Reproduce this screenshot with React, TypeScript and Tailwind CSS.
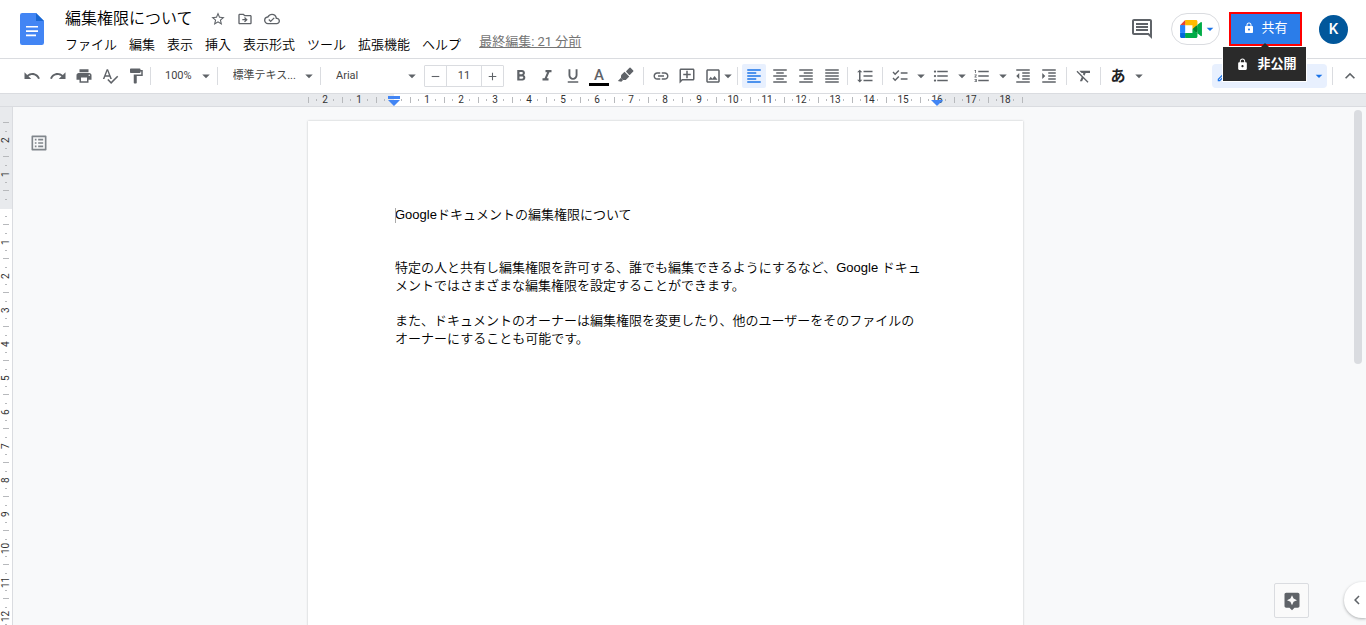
import type { ReactNode } from 'react';
import type { IconType } from 'react-icons';
import {
  MdAdd,
  MdArrowDropDown,
  MdAssistant,
  MdChecklist,
  MdChevronLeft,
  MdExpandLess,
  MdFormatAlignCenter,
  MdFormatAlignJustify,
  MdFormatAlignLeft,
  MdFormatAlignRight,
  MdFormatBold,
  MdFormatClear,
  MdFormatIndentDecrease,
  MdFormatIndentIncrease,
  MdFormatItalic,
  MdFormatLineSpacing,
  MdFormatListBulleted,
  MdFormatListNumbered,
  MdFormatPaint,
  MdFormatUnderlined,
  MdLink,
  MdLock,
  MdOutlineAddComment,
  MdOutlineCloudDone,
  MdOutlineComment,
  MdOutlineDriveFileMove,
  MdOutlineEdit,
  MdOutlineImage,
  MdOutlineListAlt,
  MdPrint,
  MdRedo,
  MdRemove,
  MdSpellcheck,
  MdStarBorder,
  MdUndo,
} from 'react-icons/md';

const MENUS = ['ファイル', '編集', '表示', '挿入', '表示形式', 'ツール', '拡張機能', 'ヘルプ'];

// Centimetre marks, counted outwards from the page margin
const H_MARKS = [2, 1, 0, ...Array.from({ length: 18 }, (_, i) => i + 1)];
const V_MARKS = [2, 1, 0, ...Array.from({ length: 12 }, (_, i) => i + 1)];

export default function App() {
  return (
    <div className="flex h-screen flex-col overflow-hidden bg-[#f8f9fa] font-[Roboto,'Noto_Sans_CJK_JP',sans-serif] text-[13px] text-[#202124]">
      <Header />
      <Toolbar />
      <HorizontalRuler />
      <div className="flex min-h-0 flex-1">
        <VerticalRuler />
        <Workspace />
      </div>
    </div>
  );
}

function Header() {
  return (
    <header className="flex h-[59px] shrink-0 items-start border-b border-[#dadce0] bg-white pl-5 pr-[18px]">
      <a href="#" aria-label="ドキュメント ホーム" className="mt-[13px]">
        <DocsLogo />
      </a>

      <div className="ml-[21px] flex flex-col pt-1.5">
        <div className="flex h-[26px] items-center">
          <h1 className="whitespace-nowrap text-[16px] font-[350] text-black">編集権限について</h1>
          <div className="ml-[17px] flex gap-[11px] text-[#5f6368]">
            <button aria-label="スター"><MdStarBorder size={16} /></button>
            <button aria-label="移動"><MdOutlineDriveFileMove size={16} /></button>
            <button aria-label="ドキュメントのステータス"><MdOutlineCloudDone size={16} /></button>
          </div>
        </div>
        <nav className="-ml-1.5 flex h-[26px] items-center">
          {MENUS.map((m) => (
            <button key={m} className="whitespace-nowrap px-1.5 font-[350] text-black">{m}</button>
          ))}
          <a href="#" className="mb-1.5 ml-3 whitespace-nowrap text-[#757575] underline">最終編集: 21 分前</a>
        </nav>
      </div>

      <div className="ml-auto flex items-center pt-3">
        <button aria-label="コメント履歴を開く" className="text-[#5f6368]">
          <MdOutlineComment size={24} />
        </button>
        <button aria-label="ビデオ通話に参加" className="ml-[17px] flex h-8 w-[49px] items-center justify-center rounded-full border border-[#dadce0] pl-1.5">
          <MeetLogo />
          <MdArrowDropDown size={16} className="shrink-0 text-[#1a73e8]" />
        </button>
        <div className="relative ml-[9px]">
          <button className="flex h-[34px] w-[73px] items-center justify-center gap-1.5 border-2 border-[#ff0000] bg-[#2b7de9] pb-0.5 text-white">
            <MdLock size={12} />
            共有
          </button>
          {/* Tooltip hanging from the share button */}
          <div role="tooltip" className="absolute -left-[7px] top-[34px] z-10 flex h-9 w-[85px] items-center justify-center gap-2 border border-white bg-[#2a2a2a] pl-1 font-bold text-white">
            <MdLock size={13} />
            非公開
            <svg width="8" height="4" viewBox="0 0 8 4" className="absolute -top-1 left-[38px]">
              <path d="M4 0 8 4H0z" fill="#2a2a2a" />
            </svg>
          </div>
        </div>
        <button aria-label="アカウント" className="ml-[17px] flex size-[29px] items-center justify-center rounded-full bg-[#01579b] text-[15px] font-medium text-white">
          K
        </button>
      </div>
    </header>
  );
}

function Toolbar() {
  return (
    <div role="toolbar" className="flex h-[34px] shrink-0 items-center bg-white text-[#5f6368]">
      <Group className="w-[151px] pl-[18px]">
        <Tool icon={MdUndo} label="元に戻す" />
        <Tool icon={MdRedo} label="やり直し" />
        <Tool icon={MdPrint} label="印刷" />
        <Tool icon={MdSpellcheck} label="スペルと文法のチェック" />
        <Tool icon={MdFormatPaint} label="書式を貼り付け" />
      </Group>
      <Group className="w-[67px]">
        <Dropdown label="ズーム" value="100%" className="w-[62px] pl-3" />
      </Group>
      <Group className="w-[103px]">
        <Dropdown label="スタイル" value="標準テキス..." className="w-[97px] pl-3" />
      </Group>
      <Group className="w-[323px] pr-0.5">
        <Dropdown label="フォント" value="Arial" className="w-[97px] pl-3" />
        <div className="ml-[3px] mr-1 flex h-[22px] w-20 rounded-[1px] border border-[#dadce0]">
          <button aria-label="フォントサイズを縮小" className="flex w-[21px] items-center justify-center">
            <MdRemove size={13} />
          </button>
          <input
            aria-label="フォントサイズ"
            defaultValue="11"
            className="w-9 border-x border-[#dadce0] text-center text-[11px] text-[#444]"
          />
          <button aria-label="フォントサイズを拡大" className="flex w-[21px] items-center justify-center">
            <MdAdd size={13} />
          </button>
        </div>
        <Tool icon={MdFormatBold} label="太字" />
        <Tool icon={MdFormatItalic} label="斜体" />
        <Tool icon={MdFormatUnderlined} label="下線" />
        <button aria-label="テキストの色" className="flex w-[26px] flex-col items-center text-[15px] font-medium leading-4">
          A
          <span className="h-[3px] w-5 bg-black" />
        </button>
        <button aria-label="ハイライトの色" className="flex w-[26px] justify-center">
          <HighlighterIcon />
        </button>
      </Group>
      <Group className="w-[94px] pr-1">
        <Tool icon={MdLink} label="リンクを挿入" />
        <Tool icon={MdOutlineAddComment} label="コメントを追加" flip />
        <Tool icon={MdOutlineImage} label="画像を挿入" />
        <Arrow label="画像のオプション" narrow />
      </Group>
      <Group className="w-[110px]">
        <Tool icon={MdFormatAlignLeft} label="左揃え" active />
        <Tool icon={MdFormatAlignCenter} label="中央揃え" />
        <Tool icon={MdFormatAlignRight} label="右揃え" />
        <Tool icon={MdFormatAlignJustify} label="両端揃え" />
      </Group>
      <Group className="w-[35px]">
        <Tool icon={MdFormatLineSpacing} label="行間隔と段落の間隔" />
      </Group>
      <Group className="w-[184px]">
        <Tool icon={MdChecklist} label="チェックリスト" />
        <Arrow label="チェックリストのメニュー" />
        <Tool icon={MdFormatListBulleted} label="箇条書き" />
        <Arrow label="箇条書きメニュー" />
        <Tool icon={MdFormatListNumbered} label="番号付きリスト" />
        <Arrow label="番号付きリストのメニュー" />
        <Tool icon={MdFormatIndentDecrease} label="インデント減" />
        <Tool icon={MdFormatIndentIncrease} label="インデント増" />
      </Group>
      <Group className="w-[34px]">
        <Tool icon={MdFormatClear} label="書式をクリア" />
      </Group>
      <button aria-label="入力ツール" className="ml-1 w-[26px] text-[15px] font-bold text-[#202124]">あ</button>
      <Arrow label="入力ツールを選択" />

      <button aria-label="編集モード" className="ml-auto flex h-6 w-[115px] items-center justify-between rounded bg-[#e8f0fe] pl-1 text-[#1a73e8]">
        <MdOutlineEdit size={14} />
        <MdArrowDropDown size={16} />
      </button>
      <div className="ml-[5px] h-[18px] w-px bg-[#dadce0]" />
      <button aria-label="メニューを非表示" className="flex w-[33px] justify-center">
        <MdExpandLess size={20} />
      </button>
    </div>
  );
}

function Group({ className, children }: { className: string; children: ReactNode }) {
  return (
    <div className={`flex h-[18px] shrink-0 items-center justify-center border-r border-[#dadce0] ${className}`}>
      {children}
    </div>
  );
}

interface ToolProps {
  icon: IconType;
  label: string;
  active?: boolean;
  flip?: boolean;
}

function Tool({ icon: Icon, label, active, flip }: ToolProps) {
  return (
    <button aria-label={label} className="flex w-[26px] shrink-0 justify-center">
      <span className={`flex size-6 items-center justify-center rounded-[2px] ${active ? 'bg-[#e8f0fe] text-[#1a73e8]' : ''}`}>
        <Icon size={18} className={flip ? '-scale-x-100' : ''} />
      </span>
    </button>
  );
}

function Arrow({ label, narrow }: { label: string; narrow?: boolean }) {
  return (
    <button aria-label={label} className={`flex shrink-0 justify-center ${narrow ? 'w-1' : 'w-[15px]'}`}>
      <MdArrowDropDown size={18} className="shrink-0" />
    </button>
  );
}

function Dropdown({ label, value, className }: { label: string; value: string; className: string }) {
  return (
    <div className="flex shrink-0 items-center">
      <select aria-label={label} className={`appearance-none bg-transparent text-[11px] text-[#444] ${className}`}>
        <option>{value}</option>
      </select>
      <MdArrowDropDown size={18} className="pointer-events-none -ml-[18px] shrink-0" />
    </div>
  );
}

function HorizontalRuler() {
  return (
    <div className="flex h-[14px] shrink-0 justify-center border-y border-[#dadce0] bg-[#e8eaed] pr-[35px]">
      <div className="flex items-center bg-[linear-gradient(90deg,#e8eaed_86px,#fff_86px,#fff_630px,#e8eaed_630px)]">
        {H_MARKS.map((n, i) => (
          <div key={i} className="relative flex h-full w-[34px] items-center">
            <span className="h-1.5 w-px bg-[#b7b9bc]" />
            <span className="ml-[7px] h-0.5 w-px bg-[#b7b9bc]" />
            <span className="flex-1 text-center text-[10px] leading-3 text-[#333]">{n || ''}</span>
            <span className="mr-2 h-0.5 w-px bg-[#b7b9bc]" />
            {n === 0 && (
              <svg width="12" height="10" viewBox="0 0 12 10" className="absolute left-3 top-0.5">
                <path d="M0 0h12v3H0zM0 4h12L6 10z" fill="#4285f4" />
              </svg>
            )}
            {n === 16 && (
              <svg width="12" height="6" viewBox="0 0 12 6" className="absolute left-[11px] top-1.5">
                <path d="M0 0h12L6 6z" fill="#4285f4" />
              </svg>
            )}
          </div>
        ))}
        <span className="h-1.5 w-px bg-[#b7b9bc]" />
      </div>
    </div>
  );
}

function VerticalRuler() {
  return (
    <div className="flex w-[13px] shrink-0 flex-col overflow-hidden border-r border-[#dadce0] bg-[linear-gradient(#e8eaed_102px,#fff_102px)] pt-[15px]">
      {V_MARKS.map((n, i) => (
        <div key={i} className="flex h-[34px] shrink-0 flex-col items-center">
          <span className="h-px w-1.5 shrink-0 bg-[#b7b9bc]" />
          <span className="mt-2 h-px w-0.5 shrink-0 bg-[#b7b9bc]" />
          <span className="flex min-h-0 flex-1 rotate-180 items-center justify-center text-[10px] leading-3 text-[#333] [writing-mode:vertical-rl]">
            {n || ''}
          </span>
          <span className="mb-[7px] h-px w-0.5 shrink-0 bg-[#b7b9bc]" />
        </div>
      ))}
    </div>
  );
}

function Workspace() {
  return (
    <main className="relative flex min-w-0 flex-1">
      <div className="w-12 shrink-0 pl-4 pt-[26px]">
        <button aria-label="ドキュメントの概要を表示" className="text-[#80868b]">
          <MdOutlineListAlt size={20} />
        </button>
      </div>

      <div className="flex flex-1 justify-center overflow-hidden pt-[14px]">
        <article className="h-[1011px] w-[715px] shrink-0 bg-white px-[87px] pt-[85px] font-['Liberation_Sans','Noto_Sans_CJK_JP',sans-serif] font-[350] leading-[18px] text-black shadow-[0_0_2px_rgba(60,64,67,0.3)]">
          <p className="relative">
            {/* Text caret */}
            <span className="absolute left-0 top-0.5 h-[15px] w-px bg-[#aaa]" />
            Googleドキュメントの編集権限について
          </p>
          <p className="mt-[35px] whitespace-nowrap">
            特定の人と共有し編集権限を許可する、誰でも編集できるようにするなど、Google ドキュ
            <br />
            メントではさまざまな編集権限を設定することができます。
          </p>
          <p className="mt-[17px] whitespace-nowrap">
            また、ドキュメントのオーナーは編集権限を変更したり、他のユーザーをそのファイルの
            <br />
            オーナーにすることも可能です。
          </p>
        </article>
      </div>

      <div className="flex w-24 shrink-0 items-end justify-between pb-[7px] pl-1">
        <button aria-label="データ探索" className="flex size-[35px] items-center justify-center rounded-[2px] border border-[#dadce0] bg-[#fafafa] text-[#5f6368]">
          <MdAssistant size={20} />
        </button>
        <button aria-label="サイドパネルを表示" className="z-10 flex h-9 w-[22px] items-center justify-center rounded-l-full bg-white pl-1 text-[#5f6368] shadow-[0_1px_3px_rgba(60,64,67,0.4)]">
          <MdChevronLeft size={18} className="shrink-0" />
        </button>
      </div>

      {/* Scrollbar thumb */}
      <div className="absolute right-1 top-[3px] h-[254px] w-2 rounded-full bg-[#dadce0]" />
    </main>
  );
}

function DocsLogo() {
  return (
    <svg width="24" height="32" viewBox="0 0 24 32">
      <path d="M2.2 0H16l8 8v21.8a2.2 2.2 0 0 1-2.2 2.2H2.2A2.2 2.2 0 0 1 0 29.8V2.2A2.2 2.2 0 0 1 2.2 0z" fill="#4285f4" />
      <path d="M16 0l8 8h-8z" fill="#1967d2" />
      <path d="M6 13h12v1.6H6zM6 17.3h12v1.6H6zM6 21.6h10v1.6H6z" fill="#fff" />
    </svg>
  );
}

function MeetLogo() {
  return (
    <svg width="22" height="18" viewBox="0 0 87.5 72" className="shrink-0">
      <path fill="#00832d" d="M49.5 36l8.53 9.75 11.47 7.33 2-17.02-2-16.64-11.69 6.44z" />
      <path fill="#0066da" d="M0 51.5V66c0 3.315 2.685 6 6 6h14.5l3-10.96-3-9.54-9.95-3z" />
      <path fill="#e94235" d="M20.5 0L0 20.5l10.55 3 9.95-3 2.95-9.41z" />
      <path fill="#2684fc" d="M20.5 20.5H0v31h20.5z" />
      <path fill="#00ac47" d="M82.6 8.68L69.5 19.42v33.66l13.16 10.79c1.97 1.54 4.85.135 4.85-2.37V11c0-2.535-2.945-3.925-4.91-2.32zM49.5 36v15.5h-29V72h43c3.315 0 6-2.685 6-6V53.08z" />
      <path fill="#ffba00" d="M63.5 0h-43v20.5h29V36l20-16.57V6c0-3.315-2.685-6-6-6z" />
    </svg>
  );
}

function HighlighterIcon() {
  return (
    <svg width="18" height="18" viewBox="0 0 24 24" fill="currentColor">
      <g transform="rotate(45 12 12)">
        <rect x="8.5" y="-1" width="7" height="8" rx="1" />
        <path d="M7.5 8.5h9V15L14 17.5h-4L7.5 15z" />
        <path d="M10 17.5h4V21l-4 2.5z" />
      </g>
    </svg>
  );
}
